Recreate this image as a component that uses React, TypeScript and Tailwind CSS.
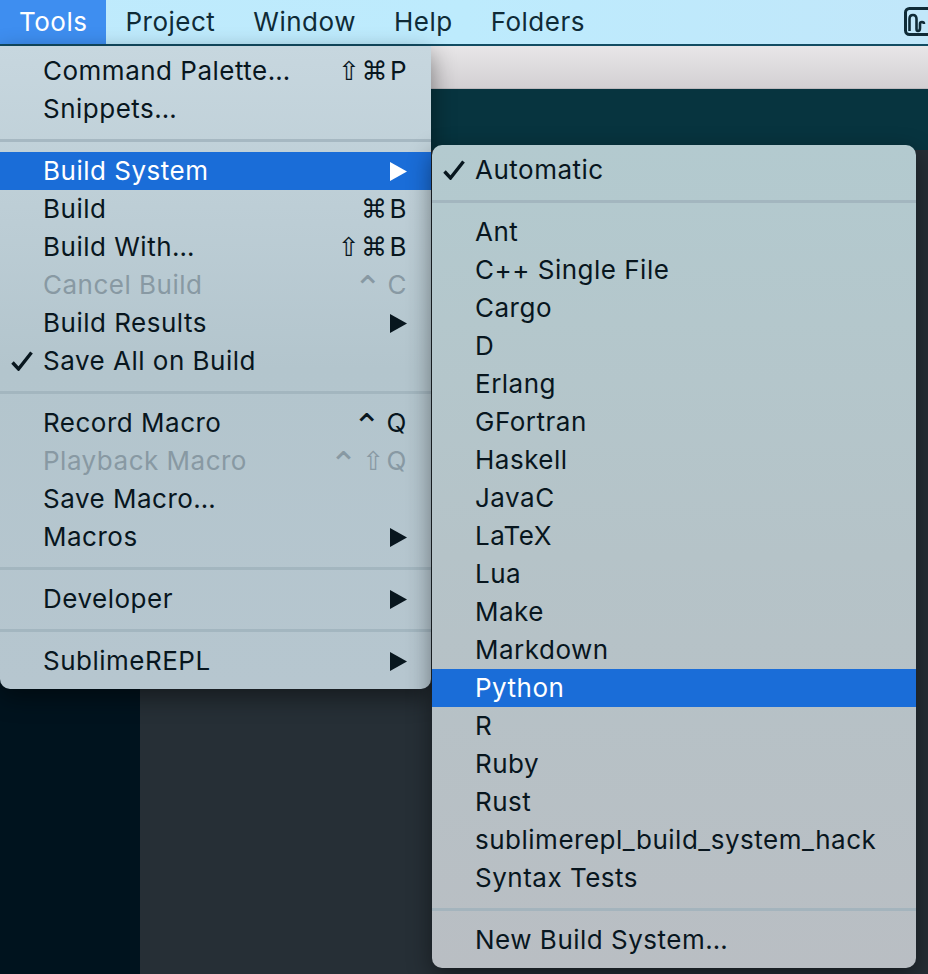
import React from "react";

type MenuEntry =
  | { kind: "sep" }
  | {
      kind: "item";
      label: string;
      shortcut?: string;
      arrow?: boolean;
      checked?: boolean;
      disabled?: boolean;
      active?: boolean;
    };

const toolsMenu: MenuEntry[] = [
  { kind: "item", label: "Command Palette…", shortcut: "⇧⌘P" },
  { kind: "item", label: "Snippets…" },
  { kind: "sep" },
  { kind: "item", label: "Build System", arrow: true, active: true },
  { kind: "item", label: "Build", shortcut: "⌘B" },
  { kind: "item", label: "Build With…", shortcut: "⇧⌘B" },
  { kind: "item", label: "Cancel Build", shortcut: "⌃C", disabled: true },
  { kind: "item", label: "Build Results", arrow: true },
  { kind: "item", label: "Save All on Build", checked: true },
  { kind: "sep" },
  { kind: "item", label: "Record Macro", shortcut: "⌃Q" },
  { kind: "item", label: "Playback Macro", shortcut: "⌃⇧Q", disabled: true },
  { kind: "item", label: "Save Macro…" },
  { kind: "item", label: "Macros", arrow: true },
  { kind: "sep" },
  { kind: "item", label: "Developer", arrow: true },
  { kind: "sep" },
  { kind: "item", label: "SublimeREPL", arrow: true },
];

const buildSystems = [
  "Ant",
  "C++ Single File",
  "Cargo",
  "D",
  "Erlang",
  "GFortran",
  "Haskell",
  "JavaC",
  "LaTeX",
  "Lua",
  "Make",
  "Markdown",
  "Python",
  "R",
  "Ruby",
  "Rust",
  "sublimerepl_build_system_hack",
  "Syntax Tests",
];

const buildMenu: MenuEntry[] = [
  { kind: "item", label: "Automatic", checked: true },
  { kind: "sep" },
  ...buildSystems.map(
    (name): MenuEntry => ({ kind: "item", label: name, active: name === "Python" })
  ),
  { kind: "sep" },
  { kind: "item", label: "New Build System…" },
];

const CheckMark = () => (
  <svg width="22" height="20" viewBox="0 0 22 20">
    <path
      d="M1.5 11.5 L7.5 18 L20.5 1.5"
      fill="none"
      stroke="currentColor"
      strokeWidth="3.4"
    />
  </svg>
);

const Arrow = () => (
  <svg width="17" height="19" viewBox="0 0 17 19">
    <polygon points="0,0 17,9.5 0,19" fill="currentColor" />
  </svg>
);

// shortcut glyphs: modifiers in DejaVu, the key letter in the menu font
const Shortcut = ({ keys }: { keys: string }) => {
  const chars = Array.from(keys);
  const key = chars.pop();
  return (
    <span className="flex items-center whitespace-nowrap">
      {chars.map((c, i) =>
        c === "⌃" ? (
          <span
            key={i}
            className="mr-[4px] translate-y-[3px] font-['DejaVu_Sans',sans-serif] text-[34px]"
          >
            {c}
          </span>
        ) : (
          <span key={i} className="mr-[1px] font-['DejaVu_Sans',sans-serif] text-[26px]">
            {c}
          </span>
        )
      )}
      <span className="ml-[1px]">{key}</span>
    </span>
  );
};

const MenuList = ({ entries }: { entries: MenuEntry[] }) => (
  <div className="flex flex-col pt-[6px] pb-[9px]">
    {entries.map((entry, i) => {
      if (entry.kind === "sep") {
        return (
          <div key={i} className="flex h-[24px] items-center">
            <div className="h-[3px] w-full bg-[#9fb2bb]/80" />
          </div>
        );
      }

      const tone = entry.active
        ? "bg-[#1a6dd8] text-white"
        : entry.disabled
          ? "text-[#8899a3]"
          : "text-[#08161e]";

      return (
        <div key={i} className={`flex h-[38px] items-center pr-[24px] ${tone}`}>
          <div className="flex w-[43px] shrink-0 items-center pl-[11px]">
            {entry.checked && <CheckMark />}
          </div>
          <span className="flex-1 whitespace-nowrap">{entry.label}</span>
          {entry.shortcut && <Shortcut keys={entry.shortcut} />}
          {entry.arrow && <Arrow />}
        </div>
      );
    })}
  </div>
);

const MenuBarIcon = () => (
  <svg width="30" height="30" viewBox="0 0 30 30" className="text-[#0f2b37]">
    <rect
      x="1.5"
      y="1.5"
      width="30"
      height="26"
      rx="4"
      fill="none"
      stroke="currentColor"
      strokeWidth="3"
    />
    <path
      d="M5.5 24 V12 Q5.5 8 9 8 Q12.5 8 12.5 12 V22 Q12.5 24 14 24 Q16 24 16 21 V17 Q16 15 18 15 Q20 15 20 17"
      fill="none"
      stroke="currentColor"
      strokeWidth="2.6"
    />
  </svg>
);

export default function App() {
  const menus = ["Project", "Window", "Help", "Folders"];

  return (
    <div className="relative flex h-[974px] w-[928px] flex-col overflow-hidden bg-[#252e35] font-[Inter,'DejaVu_Sans',sans-serif] text-[26px] leading-none tracking-[0.5px]">
      {/* menu bar */}
      <header className="flex h-[46px] shrink-0 items-stretch border-b-2 border-[#124c62] bg-linear-to-r from-[#bfeafc] via-[#bdebfd] to-[#c1e7fa] text-[#0f2b37]">
        <div className="flex items-center bg-[#3e8ef0] px-[19px] text-white">Tools</div>
        {menus.map((m) => (
          <div key={m} className="flex items-center px-[19px]">
            {m}
          </div>
        ))}
        <div className="ml-auto flex items-center pl-2">
          <div className="w-[24px] overflow-hidden">
            <MenuBarIcon />
          </div>
        </div>
      </header>

      {/* editor window behind the menus */}
      <div className="flex flex-1">
        <aside className="w-[140px] shrink-0 bg-[#00131e]" />
        <div className="flex flex-1 flex-col">
          <div className="h-[43px] shrink-0 border-b border-[#bdb9bd] bg-linear-to-b from-[#e8e6e8] to-[#d3d0d3]" />
          <div className="h-[61px] shrink-0 bg-[#07343f]" />
          <div className="flex-1 bg-[#262f36]" />
        </div>
      </div>

      {/* Tools menu */}
      <div className="absolute left-0 top-[46px] w-[431px] rounded-b-[10px] bg-linear-to-b from-[#c7d7df] via-[#b3c5cd] to-[#b6c6cf] shadow-[0_8px_24px_rgba(0,0,0,0.45)]">
        <MenuList entries={toolsMenu} />
      </div>

      {/* Build System submenu */}
      <div className="absolute left-[432px] top-[145px] w-[484px] rounded-[10px] bg-linear-to-b from-[#b3cacf] via-[#b5c3c8] to-[#b9bec3] shadow-[0_8px_24px_rgba(0,0,0,0.45)]">
        <MenuList entries={buildMenu} />
      </div>
    </div>
  );
}
